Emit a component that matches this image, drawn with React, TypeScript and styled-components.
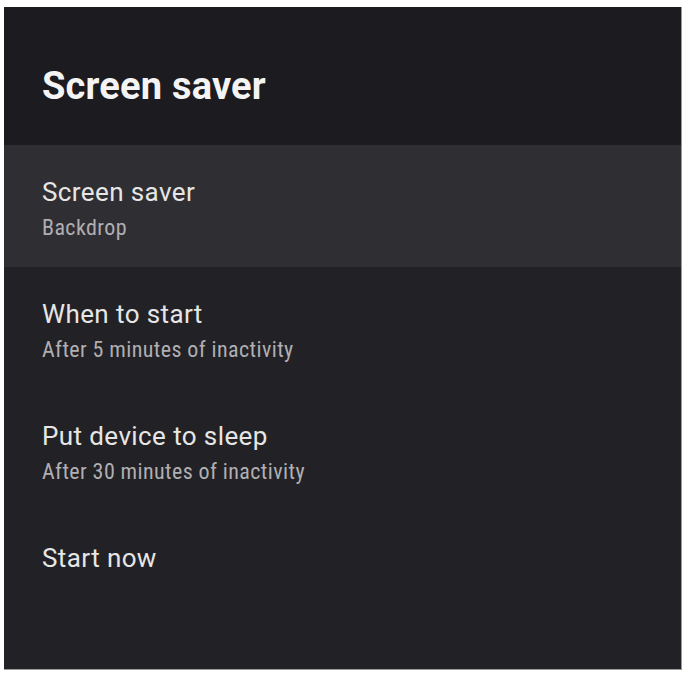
import styled, { createGlobalStyle } from "styled-components";

const GlobalStyle = createGlobalStyle`
  html, body {
    margin: 0;
    padding: 0;
    background: #ffffff;
  }
`;

const Page = styled.div`
  padding: 7px 0 0 4px;
`;

const Panel = styled.section`
  width: 677px;
  height: 662px;
  background-color: #222125;
  border-right: 1px solid #9a9a9a;
  border-bottom: 1px solid #9a9a9a;
  display: flex;
  flex-direction: column;
  font-family: Roboto, "Noto Sans", sans-serif;
  color: #ececec;
`;

const Header = styled.header`
  height: 138px;
  background-color: #1c1b1f;
  display: flex;
  align-items: flex-start;
  padding-left: 38px;
`;

const Title = styled.h1`
  margin: 0;
  padding-top: 59px;
  font-size: 38px;
  font-weight: 700;
  line-height: 40px;
  letter-spacing: 0.2px;
  color: #f4f4f4;
`;

const List = styled.ul`
  list-style: none;
  margin: 0;
  padding: 0;
  display: flex;
  flex-direction: column;
`;

const Row = styled.li<{ $focused?: boolean }>`
  height: 122px;
  padding-left: 38px;
  background-color: ${(p) => (p.$focused ? "#2f2e32" : "transparent")};
  display: flex;
  flex-direction: column;
`;

const RowTitle = styled.span`
  margin-top: 32px;
  font-size: 26px;
  line-height: 30px;
  letter-spacing: 0.4px;
  color: #e6e6e6;
`;

const RowSub = styled.span`
  margin-top: 9px;
  font-family: "Liberation Sans Narrow", "Roboto Condensed", Roboto, sans-serif;
  font-size: 22px;
  line-height: 24px;
  letter-spacing: 0.4px;
  color: #b0afb3;
`;

const items = [
  { title: "Screen saver", sub: "Backdrop", focused: true },
  { title: "When to start", sub: "After 5 minutes of inactivity" },
  { title: "Put device to sleep", sub: "After 30 minutes of inactivity" },
  { title: "Start now" },
];

export default function App() {
  return (
    <>
      <GlobalStyle />
      <Page>
        <Panel>
          <Header>
            <Title>Screen saver</Title>
          </Header>
          <List>
            {items.map((it) => (
              <Row key={it.title} $focused={it.focused}>
                <RowTitle>{it.title}</RowTitle>
                {it.sub && <RowSub>{it.sub}</RowSub>}
              </Row>
            ))}
          </List>
        </Panel>
      </Page>
    </>
  );
}
